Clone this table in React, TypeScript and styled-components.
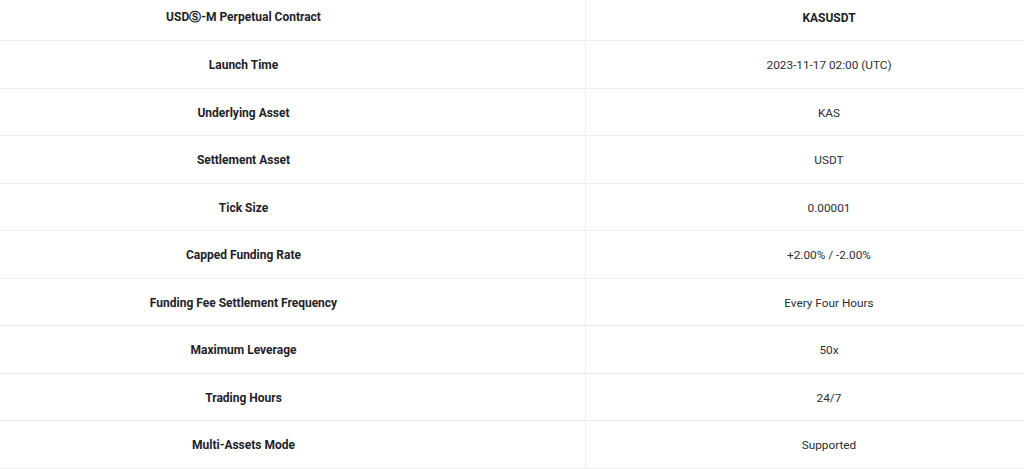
import React from "react";
import styled, { createGlobalStyle } from "styled-components";

const Global = createGlobalStyle`
  html, body { margin: 0; padding: 0; background: #ffffff; overflow: hidden; }
  body { font-family: Roboto, "Liberation Sans", Arial, sans-serif; color: #1e2329; }
`;

const Table = styled.div`
  display: grid;
  grid-template-columns: 586px 1fr;
  margin-top: -6.5px;
  width: 1024px;
`;

const Cell = styled.div<{ $side: "left" | "right"; $bold?: boolean }>`
  height: 44.5px;
  display: flex;
  align-items: center;
  justify-content: center;
  border-bottom: 1px solid #eeeef0;
  border-right: ${(p) => (p.$side === "left" ? "1px solid #eeeef0" : "none")};
  padding: ${(p) => (p.$side === "left" ? "2px 98px 0 0" : "2px 0 0 48px")};
  box-sizing: content-box;
  font-size: ${(p) => (p.$bold ? "12px" : "11.8px")};
  font-weight: ${(p) => (p.$bold ? 700 : 400)};
  color: ${(p) => (p.$bold ? "#1e2329" : "#2b2f36")};
  white-space: nowrap;
`;

const rows: [string, string, boolean?][] = [
  ["USDⓈ-M Perpetual Contract", "KASUSDT", true],
  ["Launch Time", "2023-11-17 02:00 (UTC)"],
  ["Underlying Asset", "KAS"],
  ["Settlement Asset", "USDT"],
  ["Tick Size", "0.00001"],
  ["Capped Funding Rate", "+2.00% / -2.00%"],
  ["Funding Fee Settlement Frequency", "Every Four Hours"],
  ["Maximum Leverage", "50x"],
  ["Trading Hours", "24/7"],
  ["Multi-Assets Mode", "Supported"],
];

export default function App() {
  return (
    <>
      <Global />
      <Table>
        {rows.map(([k, v, head]) => (
          <React.Fragment key={k}>
            <Cell $side="left" $bold>{k}</Cell>
            <Cell $side="right" $bold={!!head}>{v}</Cell>
          </React.Fragment>
        ))}
      </Table>
    </>
  );
}
